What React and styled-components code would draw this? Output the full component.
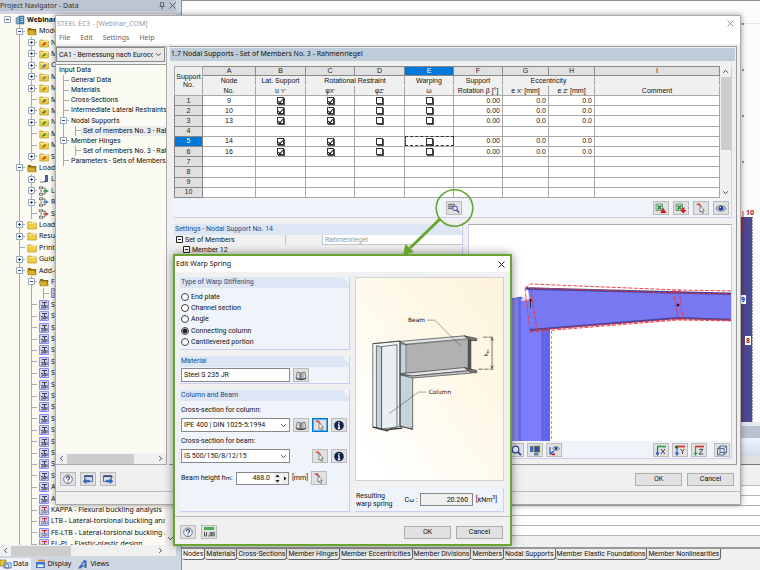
import { Fragment } from "react";
import styled, { createGlobalStyle, css } from "styled-components";

const MODULES = [
  "STEEL", "STEEL EC3", "STEEL AISC", "STEEL SIA", "STEEL IS", "STEEL BS",
  "STEEL GB", "STEEL CSA", "STEEL AS", "STEEL NTC-DF", "STEEL SP",
  "STEEL Plastic", "STEEL SANS", "STEEL Fatigue Members", "STEEL NBR",
  "STEEL HK", "ALUMINUM", "ALUMINUM ADM",
];

const NAV_ROWS = [
  { depth: 0, icon: "project", label: "Webinar", box: "-", bold: true },
  { depth: 1, icon: "open", label: "Model Data", box: "-" },
  { depth: 2, icon: "folder", label: "Nodes", box: "+", mark: "#c22" },
  { depth: 2, icon: "folder", label: "Materials", box: "+", mark: "#2a8a3a" },
  { depth: 2, icon: "folder", label: "Cross-Sections", box: "+", mark: "#2a5fd0" },
  { depth: 2, icon: "folder", label: "Member Hinges", box: "+", mark: "#777" },
  { depth: 2, icon: "folder", label: "Member Eccentricities", box: "+", mark: "#b06a20" },
  { depth: 2, icon: "folder", label: "Member Divisions", mark: "#555" },
  { depth: 2, icon: "folder", label: "Members", box: "+", mark: "#555" },
  { depth: 2, icon: "folder", label: "Nodal Supports", box: "+", mark: "#1a8a2a" },
  { depth: 2, icon: "folder", label: "Member Elastic Foundations", mark: "#1a8a2a" },
  { depth: 2, icon: "folder", label: "Member Nonlinearities", mark: "#a8501a" },
  { depth: 2, icon: "folder", label: "Sets of Members", box: "+", mark: "#c22" },
  { depth: 1, icon: "open", label: "Load Cases and Combinations", box: "-" },
  { depth: 2, icon: "load", label: "Load Cases", box: "+" },
  { depth: 2, icon: "combo", label: "Load Combinations", box: "+", mark: "#1a9a3a" },
  { depth: 2, icon: "combo", label: "Result Combinations", box: "+", mark: "#3a7ad8" },
  { depth: 2, icon: "combo", label: "Super Combinations", mark: "#d02020" },
  { depth: 1, icon: "folder", label: "Loads", box: "+" },
  { depth: 1, icon: "folder", label: "Results", box: "+" },
  { depth: 1, icon: "folder", label: "Printout Reports" },
  { depth: 1, icon: "folder", label: "Guide Objects", box: "+" },
  { depth: 1, icon: "open", label: "Add-on Modules", box: "-" },
  { depth: 2, icon: "open", label: "Favorites", box: "-" },
  { depth: 3, icon: "module", label: "STEEL EC3", mark: "#c22" },
  ...MODULES.map((label) => ({ depth: 2, icon: "module", label })),
  { depth: 2, icon: "module", label: "KAPPA - Flexural buckling analysis", mark: "#c22" },
  { depth: 2, icon: "module", label: "LTB - Lateral-torsional buckling analysis", mark: "#c22" },
  { depth: 2, icon: "module", label: "FE-LTB - Lateral-torsional buckling analysis", mark: "#c22" },
  { depth: 2, icon: "module", label: "EL-PL - Elastic-plastic design", mark: "#c22" },
];

const INPUT_ROWS = [
  { depth: 0, label: "Input Data" },
  { depth: 1, label: "General Data" },
  { depth: 1, label: "Materials" },
  { depth: 1, label: "Cross-Sections" },
  { depth: 1, label: "Intermediate Lateral Restraints" },
  { depth: 1, label: "Nodal Supports", box: "-" },
  { depth: 2, label: "Set of members No. 3 - Rahmenriegel", selected: true },
  { depth: 1, label: "Member Hinges", box: "-" },
  { depth: 2, label: "Set of members No. 3 - Rahmenriegel" },
  { depth: 1, label: "Parameters - Sets of Members" },
];

const SUPPORTS = { 1: "9", 2: "10", 3: "13", 5: "14", 6: "16" };

const DATA_TABS = [
  "Nodes", "Materials", "Cross-Sections", "Member Hinges",
  "Member Eccentricities", "Member Divisions", "Members", "Nodal Supports",
  "Member Elastic Foundations", "Member Nonlinearities",
];

const STIFFENING = [
  "End plate", "Channel section", "Angle", "Connecting column",
  "Cantilevered portion",
];

/* ---------- icons ---------- */

function Chevron({ dir = "down" }) {
  const turn = { down: 0, left: 90, up: 180, right: 270 }[dir];
  return (
    <svg width="7" height="7" viewBox="0 0 7 7" aria-hidden="true">
      <path d="M1.2 2.3 3.5 4.6 5.8 2.3" fill="none" stroke="#444" strokeWidth="1" transform={`rotate(${turn} 3.5 3.5)`} />
    </svg>
  );
}

function CloseIcon({ color = "#555" }) {
  return (
    <svg width="7" height="7" viewBox="0 0 7 7" aria-hidden="true">
      <path d="M.5.5 6.5 6.5M6.5.5.5 6.5" stroke={color} strokeWidth=".9" />
    </svg>
  );
}

function ExpandIcon({ plus, dark }) {
  return (
    <svg width="7" height="7" viewBox="0 0 7 7" aria-hidden="true">
      <path d="M.5.5h6v6h-6z" fill="#fff" stroke={dark ? "#222" : "#9aa6ba"} />
      <path d={plus ? "M2 3.500h3M3.500 2v3" : "M2 3.500h3"} stroke={dark ? "#222" : "#3a4a78"} />
    </svg>
  );
}

function NavIcon({ type, mark }) {
  return (
    <svg width="10" height="10" viewBox="0 0 10 10" aria-hidden="true">
      {type === "project" && (
        <>
          <path d="M1 3 5 1v8H1z" fill="#7fa8c8" stroke="#49708f" strokeWidth=".5" />
          <path d="M4.5 1H9v8H4.5z" fill="#4f86b4" stroke="#335f86" strokeWidth=".5" />
          <path d="M5.500 2.500h2.600M5.500 4.500h2.600M5.500 6.500h2.600" stroke="#dbe9f4" strokeWidth=".7" />
        </>
      )}
      {type === "open" && (
        <>
          <path d="M.8 2h3l1 1h4.400v6H.8z" fill="#8a6d10" />
          <path d="M0 4.200h7.500L9.200 9H1.500z" fill="#d3b02a" stroke="#8d7214" strokeWidth=".4" />
        </>
      )}
      {type === "folder" && (
        <>
          <path d="M.8 2h3l1 1h4.600v6H.8z" fill="#f0cf45" stroke="#a98c1c" strokeWidth=".6" />
          <path d="M1.200 3.500h8" stroke="#fff0a0" strokeWidth=".7" />
          {mark && <path d="M3.500 7.500 6.500 4.500M5 6h1.500" stroke={mark} strokeWidth="1.300" />}
        </>
      )}
      {type === "load" && (
        <>
          <path d="M1 8h6" stroke="#777" />
          <path d="M6 1h3v7H5l1-2z" fill="#4a5f92" />
        </>
      )}
      {type === "combo" && (
        <>
          <path d="M.5.8h3v2h-3zM.5 7.200h3v2h-3z" fill="#fff" stroke="#333" strokeWidth=".7" />
          <path d="M4 2h2v6H4M2 4v2M4 5h2" fill="none" stroke="#333" strokeWidth=".7" />
          <path d="M6.500 3 9.800 5 6.500 7z" fill={mark} />
        </>
      )}
      {type === "module" && (
        <>
          <path d="M.5.5h9v9h-9z" fill="#d2d2ee" stroke="#8c8cf4" />
          <path d="M3 2.500h5M5.500 2.500v3" stroke={mark || "#3f4358"} fill="none" />
          <path d="M2 5.500h2v2.500M2 8h2M5 5.500h1.500V8H5zM8 5v3" stroke={mark ? "#7a7e92" : "#3f4358"} strokeWidth=".9" fill="none" />
        </>
      )}
    </svg>
  );
}

function Glyph({ name }) {
  return (
    <svg width="12" height="11" viewBox="0 0 12 11" aria-hidden="true">
      {name === "help" && (
        <>
          <circle cx="6" cy="5.300" r="4.300" fill="#f4f6fa" stroke="#667" strokeWidth=".9" />
          <path d="M4.400 4.200c0-2.200 3.400-2 3.200 0C7.500 5.200 6 5.200 6 6.500M6 7.400v1" stroke="#2c3f80" strokeWidth="1.100" fill="none" />
        </>
      )}
      {(name === "prev" || name === "next") && (
        <>
          <path d={name === "prev" ? "M2.500 1.500h8v6h-8z" : "M1.500 1.500h8v6h-8z"} fill="#dce6f2" stroke="#37507c" strokeWidth=".8" />
          <path d="M2 2.500h8.500" stroke="#37507c" strokeWidth="1.300" />
          <path d={name === "prev" ? "M.5 7.200 4.500 3.800v2h4v2.800h-4v2z" : "M11.500 7.200 7.500 3.800v2h-4v2.800h4v2z"} fill="#2c66b8" stroke="#fff" strokeWidth=".3" />
        </>
      )}
      {name === "details" && (
        <>
          <path d="M0 1.500h7M0 3.500h7M0 5.500h5" stroke="#7a7f86" strokeWidth="1.300" />
          <circle cx="7" cy="5.300" r="2.300" fill="#dfe9fb" stroke="#3a4ea4" />
          <path d="m8.700 7 2.500 2.700" stroke="#3a4ea4" strokeWidth="1.500" />
        </>
      )}
      {(name === "excelUp" || name === "excelDown") && (
        <>
          <path d="M1 1h6.500v6.500H1z" fill="#cfe6d4" stroke="#6f9a7a" />
          <path d="m2.500 2.500 4 4M6.500 2.500l-4 4" stroke="#1e7a3c" strokeWidth="1.300" />
          <path d={name === "excelUp" ? "M8.300 5 11.500 10H5.200z" : "M8.300 10.500 5.200 7.200 7.200 7V4.500h2.200V7l2 .2z"} fill="#d51d1d" />
        </>
      )}
      {name === "pick" && (
        <>
          <path d="m1.500 1 4.500 1.500M3.500 0l3 4" stroke="#d44" strokeWidth="1.200" />
          <path d="m5 2.500 4.300 5-1.700.1 1 2.200-1.200.5-1-2.200L5 9z" fill="#fff" stroke="#555" strokeWidth=".7" />
        </>
      )}
      {name === "eye" && (
        <>
          <path d="M.8 5.500C3 1.600 9 1.600 11.200 5.500 9 9.200 3 9.200.8 5.500z" fill="#b7c0d2" stroke="#5d6880" strokeWidth=".7" />
          <circle cx="6" cy="5.200" r="2.300" fill="#1e3d94" />
          <circle cx="5.400" cy="4.600" r=".7" fill="#fff" />
        </>
      )}
      {name === "library" && (
        <>
          <path d="M1 8 2.300 2l3.400 1v6zM6.300 9V3L9.700 2 11 8z" fill="#dedede" stroke="#666" strokeWidth=".8" />
          <path d="M1 8.700 6 9.700l5-1" stroke="#333" fill="none" />
          <path d="M4.500 3v5M8 3v5" stroke="#888" strokeWidth=".8" />
        </>
      )}
      {name === "info" && (
        <>
          <circle cx="6" cy="5.500" r="4.800" fill="#14234c" />
          <path d="M6 2v1.500M6 4.700v3.800M4.800 8.500h2.400M5 4.700h1" stroke="#fff" strokeWidth="1.300" />
        </>
      )}
      {name === "units" && (
        <>
          <path d="M1 0h10v3H1z" fill="#4cab54" />
          <path d="M1.500 5v4h2V5M5 9h1M7 5.500h1.500V9H7zM9.800 5.500h1.500V9H9.800z" fill="none" stroke="#333" strokeWidth=".8" />
        </>
      )}
      {name === "zoom" && (
        <>
          <circle cx="5.500" cy="4.500" r="3.300" fill="#eef3ff" stroke="#2a4390" strokeWidth="1.200" />
          <path d="m8 7 3 3.200" stroke="#2a4390" strokeWidth="1.700" />
        </>
      )}
      {name === "views" && (
        <>
          <path d="M1 1h3.500v6H1z" fill="#4a68ac" />
          <path d="M5 .8h6v6.700H5z" fill="#32529c" stroke="#d6c03a" strokeWidth=".7" />
          <path d="M5 8h4.500v2.500H5z" fill="#6a84bb" />
        </>
      )}
      {name === "axes" && (
        <>
          <path d="M2 2v7h5M2 9l4-3" stroke="#2255c4" strokeWidth="1.100" fill="none" />
          <path d="M4 9.500h3" stroke="#d22" strokeWidth="1.500" />
          <path d="M4.500 3.500C6 1 10 1 11.500 3.500 10 6 6 6 4.500 3.500z" fill="#cfd8ea" stroke="#345" strokeWidth=".6" />
          <circle cx="8" cy="3.400" r="1.400" fill="#1e3d94" />
        </>
      )}
      {name === "axisX" && (
        <>
          <path d="M2 1.500h9" stroke="#27a54a" strokeWidth="1.700" />
          <path d="M2.500 2v8M1 7.500 2.500 10 4 7.500" stroke="#2c50c8" strokeWidth="1.100" fill="none" />
          <path d="m6 4 4 5M10 4 6 9" stroke="#333" strokeWidth=".9" />
        </>
      )}
      {name === "axisY" && (
        <>
          <path d="M3 1.500h8" stroke="#d33" strokeWidth="1.700" />
          <path d="M3 2v8M1.500 7.500 3 10l1.500-2.500" stroke="#2c50c8" strokeWidth="1.100" fill="none" />
          <circle cx="2.500" cy="2" r="1.600" fill="#1c7030" />
          <path d="m6.500 4 2 2.500L10.500 4M8.500 6.500V9" stroke="#333" strokeWidth=".9" fill="none" />
        </>
      )}
      {name === "axisZ" && (
        <>
          <path d="M2 1.500h9" stroke="#d33" strokeWidth="1.700" />
          <path d="M2.500 2v8M1 7.500 2.500 10 4 7.500" stroke="#27a54a" strokeWidth="1.100" fill="none" />
          <path d="M6 4.300h4L6 9h4.300" stroke="#333" strokeWidth=".9" fill="none" />
        </>
      )}
      {name === "iso" && (
        <path d="M1.500 3.500h6.500V10H1.500zM4 1h6.500v6.500H4zM1.500 3.500 4 1M8 3.500 10.500 1M8 10l2.500-2.500M1.500 10 4 7.500" fill="none" stroke="#4b6492" strokeWidth=".9" />
      )}
      {name === "tabData" && (
        <>
          <path d="M0 1h6v6H0z" fill="#e9c736" stroke="#7a6a20" strokeWidth=".6" />
          <path d="M4 4h7v5H4z" fill="#fff" stroke="#3a6aa8" strokeWidth=".9" />
          <circle cx="7" cy="7" r="2" fill="#e8f0ff" stroke="#27508e" strokeWidth=".8" />
        </>
      )}
      {name === "tabDisplay" && (
        <>
          <path d="M1 3h9v6H1z" fill="#3f77bd" />
          <path d="M2.500 5.500h6v2.500h-6z" fill="#e7eef8" />
          <path d="M3 1.500h7" stroke="#c98a2a" strokeWidth="1.600" />
        </>
      )}
      {name === "tabViews" && (
        <>
          <path d="M1 9.500 7 1l2.500.5V9H7.500V6.500L3.500 9.500z" fill="#3a68b8" />
          <path d="M4.500 6.500 7.500 3v2.500z" fill="#dfe8f6" />
        </>
      )}
    </svg>
  );
}

/* ---------- small parts ---------- */

function Tree({ rows, className }) {
  return (
    <TreeList className={className}>
      {rows.map((row, i) => {
        const cells = row.icon ? row.depth + 1 : row.depth;
        return (
          <TreeRow key={i} $bold={row.bold}>
            {Array.from({ length: cells }, (_, d) => (
              <Branch key={d} $own={d === cells - 1} $line={d > 0 || !row.icon}>
                {d === cells - 1 && row.box && <ExpandIcon plus={row.box === "+"} />}
              </Branch>
            ))}
            {row.icon && <IconSlot><NavIcon type={row.icon} mark={row.mark} /></IconSlot>}
            <TreeLabel $selected={row.selected}>{row.label}</TreeLabel>
          </TreeRow>
        );
      })}
    </TreeList>
  );
}

function HScroll() {
  return (
    <ScrollRow>
      <Chevron dir="left" />
      <ScrollTrack>
        <ScrollThumb />
      </ScrollTrack>
      <Chevron dir="right" />
    </ScrollRow>
  );
}

function Tool({ icon, label, focused }) {
  return (
    <IconButton type="button" aria-label={label} $focused={focused}>
      <Glyph name={icon} />
    </IconButton>
  );
}

function Picker({ id, value, label }) {
  return (
    <SelectWrap>
      <Select id={id} aria-label={label} defaultValue={value}>
        <option>{value}</option>
      </Select>
      <Chevron />
    </SelectWrap>
  );
}

/* ---------- drawings ---------- */

function FrameDrawing() {
  return (
    <Scene aria-label="Frame model">
      <g transform="translate(-469 -224)">
        <path d="M505 298 521 296l28 3v143h-44z" fill="#7d7dfa" />
        <path d="M505 299 518 297v145h-13z" fill="#8787e6" />
        <path d="M518 296h3v146h-3zM541 300h4v142h-4z" fill="#6969ec" />
        <path d="M545 300h5v142h-5z" fill="#6262f2" />
        <path d="m512 298 8-2 24 5 6-2M543 301v141" fill="none" stroke="#4f4fb0" strokeWidth=".6" strokeDasharray="3 1" />
        <path d="M551.500 330v112" stroke="#888" strokeDasharray="3 2" strokeWidth=".8" />
        <path d="M528 287 678 291l60 2v26l-60-2-147 12z" fill="#7878f3" />
        <path d="M526 287.500 678 291.500l60 1.500" stroke="#45459c" strokeWidth="2.500" fill="none" />
        <path d="m530 329 148-12 60 2" stroke="#45459c" strokeWidth="2" fill="none" />
        <path d="M522 297 528 290l2 9-9 1z" fill="#fff" opacity=".7" />
        <g fill="none" stroke="#ec3038" strokeWidth=".9" strokeDasharray="4 1.500">
          <path d="m525 287 6-4 147 6 60 1M525 287l5 44 148-12 60 1M531 288l6 41M531 287l147 5 60 1M535 329l143-11 60 1" />
          <path d="m673 290 5 27M679 289l4 28M672 290h9M675 318h8" />
        </g>
        <path d="M530.500 299v8" stroke="#333" />
        <circle cx="530.500" cy="299" r="1.300" fill="#800" />
        <circle cx="678" cy="304" r="1.500" fill="#600" />
      </g>
    </Scene>
  );
}

function JointDrawing() {
  return (
    <JointSvg viewBox="0 0 149 206" aria-label="Connecting column">
      <g transform="scale(.3333) translate(-15 -52)" stroke="#333" strokeWidth="2" strokeLinejoin="round">
        <path d="M148 250 187 262V515L148 505z" fill="#c6d3da" />
        <path d="M65 253 148 245 148 505 110 516 65 508z" fill="#f3f6f8" />
        <path d="M76 259 92 263V514L76 509z" fill="#c3d1d8" />
        <path d="M92 262 139 256V508L92 514z" fill="#e9f0f4" />
        <path d="M65 508 110 520 113 516 155 511" fill="none" strokeWidth="4" />
        <path d="M148 505 187 515 180 508" fill="none" />
        <path d="M166 256 362 240V328L166 344z" fill="#b1b1b1" strokeWidth="1" />
        <path d="M150 256 166 256V340L150 346z" fill="#c6d3da" strokeWidth="1" />
        <path d="M148 246 345 229 364 237 166 255z" fill="#dde2e4" />
        <path d="M345 229 383 237V244L364 243z" fill="#777" />
        <path d="M357 242h8v92l-8-6z" fill="#555" />
        <path d="M150 345 345 326 366 335 186 352z" fill="#e2e5e6" />
        <path d="M150 348 186 358 366 343V335L186 352z" fill="#c5c8ca" />
        <path d="M345 326 383 335V342L366 342z" fill="#777" />
        <path d="M65 253 148 245V505" fill="none" />
        <path d="M230 181H255L335 261M228 401H205L115 467" fill="none" stroke="#444" strokeWidth="1.500" />
        <path d="M402 233H434M388 331H434" strokeWidth="2" strokeDasharray="14 3" />
        <path d="M430 236V328M426 244 430 235 434 244M426 320 430 329 434 320" fill="none" strokeWidth="2" />
        <g stroke="none" fill="#111" fontSize="18">
          <text x="173" y="187" fontFamily="DejaVu Sans">Beam</text>
          <text x="236" y="407" fontFamily="DejaVu Sans">Column</text>
          <text transform="translate(416 292) rotate(-90)">h<tspan fontSize="13" dy="4">m</tspan></text>
        </g>
      </g>
    </JointSvg>
  );
}

/* ---------- page sections ---------- */

function Navigator() {
  return (
    <NavPane>
      <NavTitle>
        <span>Project Navigator - Data</span>
        <NavTitleTools>
          <svg width="6" height="8" viewBox="0 0 6 8" aria-hidden="true">
            <path d="M1.500.5h3v4h-3zM.3 4.500h5.400M3 4.500v3" fill="none" stroke="#555" strokeWidth=".8" />
          </svg>
          <CloseIcon />
        </NavTitleTools>
      </NavTitle>
      <NavBody>
        <NavTree rows={NAV_ROWS} />
        <NavVScroll>
          <Chevron />
        </NavVScroll>
      </NavBody>
      <HScroll />
      <NavTabs>
        <NavTab type="button" $active><Glyph name="tabData" />Data</NavTab>
        <NavTab type="button"><Glyph name="tabDisplay" />Display</NavTab>
        <NavTab type="button"><Glyph name="tabViews" />Views</NavTab>
      </NavTabs>
    </NavPane>
  );
}

function Workspace() {
  return (
    <WorkPane>
      <ModelView>
        <svg width="60" height="424" aria-label="Model">
          <path d="M0 22.500h60" stroke="#e8e8e8" />
          <path d="M42 23h2M42 69h2M42 115h2M42 161h2" stroke="#333" />
          <path d="M41 216h11v205H41z" fill="#4a4a92" />
          <path d="M52.500 216v205" stroke="#999" strokeDasharray="2 1" />
          <path d="m42 232 1-22v214" stroke="#c22" strokeWidth=".8" fill="none" opacity=".6" />
          <path d="M41 294h5v9h-5zM45 335h6v9h-6z" fill="#fff" />
          <g fontSize="7" fontWeight="bold">
            <text x="46" y="214" fill="#8c1010">10</text>
            <text x="41" y="301" fill="#1a1ac0">9</text>
            <text x="46" y="342" fill="#8c1010">8</text>
          </g>
        </svg>
      </ModelView>
      <PanelTitle />
      <PanelTools />
      <PanelLetters />
      <PanelHead />
      {[1, 2, 3, 4, 5].map((n) => <PanelLine key={n} />)}
      <DataTabs>
        {DATA_TABS.map((tab, i) => (
          <DataTab type="button" key={tab} $active={i === 0}>{tab}</DataTab>
        ))}
      </DataTabs>
    </WorkPane>
  );
}

function SupportTable() {
  return (
    <TableFrame>
      <Grid>
        <colgroup>
          {[28, 53, 50, 49, 50, 49, 49, 46, 46].map((w, i) => <col key={i} width={w} />)}
          <col />
        </colgroup>
        <thead>
          <tr>
            <HeadCell rowSpan="3">Support<br />No.</HeadCell>
            {[..."ABCDEFGHI"].map((l) => <LetterCell key={l} $on={l === "E"}>{l}</LetterCell>)}
          </tr>
          <tr>
            <HeadCell $top>Node</HeadCell>
            <HeadCell $top>Lat. Support</HeadCell>
            <HeadCell $top colSpan="2">Rotational Restraint</HeadCell>
            <HeadCell $top>Warping</HeadCell>
            <HeadCell $top>Support</HeadCell>
            <HeadCell $top colSpan="2">Eccentricity</HeadCell>
            <HeadCell $top />
          </tr>
          <tr>
            <HeadCell $low>No.</HeadCell>
            <HeadCell $low>u <Small>Y'</Small></HeadCell>
            <HeadCell $low>φ<Small>X'</Small></HeadCell>
            <HeadCell $low>φ<Small>Z'</Small></HeadCell>
            <HeadCell $low>ω</HeadCell>
            <HeadCell $low>Rotation β [°]</HeadCell>
            <HeadCell $low>e <Small>X'</Small> [mm]</HeadCell>
            <HeadCell $low>e <Small>Z'</Small> [mm]</HeadCell>
            <HeadCell $low>Comment</HeadCell>
          </tr>
        </thead>
        <tbody>
          {Array.from({ length: 10 }, (_, i) => i + 1).map((n) => {
            const node = SUPPORTS[n];
            return (
              <tr key={n}>
                <RowHead $on={n === 5}>{n}</RowHead>
                <Cell>{node}</Cell>
                {["Lateral", "Rotation X", "Rotation Z", "Warping"].map((name, c) => (
                  <Cell key={name} $cursor={n === 5 && c === 3}>
                    {node && <Check type="checkbox" aria-label={`${name} ${node}`} defaultChecked={c < 2} />}
                  </Cell>
                ))}
                <Cell $num>{node && "0.00"}</Cell>
                <Cell $num>{node && "0.0"}</Cell>
                <Cell $num>{node && "0.0"}</Cell>
                <Cell />
              </tr>
            );
          })}
        </tbody>
      </Grid>
      <VScroll>
        <Chevron dir="up" />
        <VThumb />
        <Chevron />
      </VScroll>
    </TableFrame>
  );
}

function DesignWindow() {
  return (
    <MainWindow>
      <TitleBar>
        <span>STEEL EC3 - [Webinar_COM]</span>
        <PlainButton type="button" aria-label="Close"><CloseIcon color="#888" /></PlainButton>
      </TitleBar>
      <MenuBar>
        {["File", "Edit", "Settings", "Help"].map((m) => <PlainButton type="button" key={m}>{m}</PlainButton>)}
      </MenuBar>
      <WindowBody>
        <Sidebar>
          <CasePicker>
            <Picker label="Design case" value="CA1 - Bemessung nach Eurocode 3" />
          </CasePicker>
          <SideTree>
            <InputTree rows={INPUT_ROWS} />
            <HScroll />
          </SideTree>
        </Sidebar>
        <Content>
          <Heading>1.7 Nodal Supports - Set of Members No. 3 - Rahmenriegel</Heading>
          <TablePanel>
            <SupportTable />
            <TableTools>
              <ToolGroup $start={272}><Tool icon="details" label="Edit warp spring" /></ToolGroup>
              <ToolGroup $gap={4}>
                <Tool icon="excelUp" label="Export" />
                <Tool icon="excelDown" label="Import" />
                <Tool icon="pick" label="Pick" />
                <Tool icon="eye" label="View" />
              </ToolGroup>
            </TableTools>
          </TablePanel>
          <LowerArea>
            <SettingsPanel>
              <GroupTitle>Settings - Nodal Support No. 14</GroupTitle>
              <SettingRow>
                <SettingName><ExpandIcon dark />Set of Members</SettingName>
                <SettingSymbol />
                <SettingValue>Rahmenriegel</SettingValue>
              </SettingRow>
              <SettingRow $sub><ExpandIcon dark />Member 12</SettingRow>
            </SettingsPanel>
            <ViewPanel>
              <FrameDrawing />
              <ViewTools>
                <ToolGroup $start={38} $gap={3}>
                  <Tool icon="zoom" label="Zoom" />
                  <Tool icon="views" label="Views" />
                  <Tool icon="axes" label="Show axes" />
                </ToolGroup>
                <ToolGroup $gap={3}>
                  <Tool icon="axisX" label="View in X" />
                  <Tool icon="axisY" label="View in Y" />
                  <Tool icon="axisZ" label="View in Z" />
                  <LastTool><Tool icon="iso" label="Isometric view" /></LastTool>
                </ToolGroup>
              </ViewTools>
            </ViewPanel>
          </LowerArea>
        </Content>
      </WindowBody>
      <WindowFooter>
        <ToolGroup $gap={4}>
          <Tool icon="help" label="Help" />
          <Tool icon="prev" label="Previous" />
          <Tool icon="next" label="Next" />
        </ToolGroup>
        <ButtonPair>
          <PushButton type="button">OK</PushButton>
          <PushButton type="button">Cancel</PushButton>
        </ButtonPair>
      </WindowFooter>
      <StatusBar />
    </MainWindow>
  );
}

function WarpDialog() {
  return (
    <Dialog role="dialog" aria-label="Edit Warp Spring">
      <DialogTitle>
        <span>Edit Warp Spring</span>
        <PlainButton type="button" aria-label="Close"><CloseIcon color="#111" /></PlainButton>
      </DialogTitle>
      <DialogBody>
        <FormColumn>
          <Group>
            <GroupTitle>Type of Warp Stiffening</GroupTitle>
            <RadioList>
              {STIFFENING.map((name) => (
                <RadioLabel key={name}>
                  <Radio type="radio" name="stiffening" defaultChecked={name === "Connecting column"} />
                  {name}
                </RadioLabel>
              ))}
            </RadioList>
          </Group>
          <Group>
            <GroupTitle>Material</GroupTitle>
            <FieldRow>
              <TextField aria-label="Material" defaultValue="Steel S 235 JR" />
              <Tool icon="library" label="Material library" />
            </FieldRow>
          </Group>
          <Group $grow>
            <GroupTitle>Column and Beam</GroupTitle>
            <SectionFields>
              <label htmlFor="column">Cross-section for column:</label>
              <FieldRow>
                <Picker id="column" value="IPE 400 | DIN 1025-5:1994" />
                <Tool icon="library" label="Section library" />
                <Tool icon="pick" label="Pick column" focused />
                <Tool icon="info" label="Column info" />
              </FieldRow>
              <label htmlFor="beam">Cross-section for beam:</label>
              <FieldRow>
                <Picker id="beam" value="IS 500/150/8/12/15" />
                <ToolSpace />
                <Tool icon="pick" label="Pick beam" />
                <Tool icon="info" label="Beam info" />
              </FieldRow>
              <HeightRow>
                <label htmlFor="height">Beam height h<Small>m</Small>:</label>
                <Spin>
                  <SpinInput id="height" defaultValue="488.0" />
                  <svg width="14" height="11" viewBox="0 0 14 11" aria-hidden="true">
                    <path d="M0 0h7v11H0zM8 0h6v11H8z" fill="#eee" />
                    <path d="M1.500 4 3.500 1.500 5.500 4zM1.500 7 3.500 9.500 5.500 7zM10 3.500v4l2.500-2z" fill="#111" />
                  </svg>
                </Spin>
                <Unit>[mm]</Unit>
                <Tool icon="pick" label="Pick height" />
              </HeightRow>
            </SectionFields>
          </Group>
        </FormColumn>
        <PreviewColumn>
          <Preview><JointDrawing /></Preview>
          <Result>
            <ResultName htmlFor="result">Resulting warp spring</ResultName>
            <span>C<Small>ω</Small> :</span>
            <ResultField id="result" readOnly value="20.260" />
            <span>[kNm<Super>3</Super>]</span>
          </Result>
        </PreviewColumn>
      </DialogBody>
      <DialogFooter>
        <ToolGroup $gap={5}>
          <Tool icon="help" label="Help" />
          <Tool icon="units" label="Units and decimal places" />
        </ToolGroup>
        <ButtonPair>
          <PushButton type="button">OK</PushButton>
          <PushButton type="button">Cancel</PushButton>
        </ButtonPair>
      </DialogFooter>
    </Dialog>
  );
}

function App() {
  return (
    <Fragment>
      <GlobalStyle />
      <Desktop>
        <Navigator />
        <Workspace />
        <DesignWindow />
        <WarpDialog />
        <Callout width="90" height="72" viewBox="395 186 90 72" aria-hidden="true">
          <circle cx="454.500" cy="208" r="18.300" fill="none" stroke="#66a52e" strokeWidth="1.600" />
          <path d="M440 219 410 248" stroke="#66a52e" strokeWidth="3" />
          <path d="M403 255 405.500 244 414 252z" fill="#66a52e" />
        </Callout>
      </Desktop>
    </Fragment>
  );
}

const GlobalStyle = createGlobalStyle`
  * {
    box-sizing: border-box;
  }
  body {
    margin: 0;
    overflow: hidden;
    font: 7px/10px Roboto, "Liberation Sans", Arial, sans-serif;
    color: #111;
  }
  button, input, select {
    font: inherit;
    color: inherit;
  }
  svg {
    flex: none;
    display: block;
  }
`;

const Desktop = styled.div`
  position: relative;
  display: grid;
  grid-template-columns: 181px 1fr;
  grid-template-rows: minmax(0, 1fr);
  height: 100vh;
  background-color: #c5ccd8;
`;

/* navigator */

const NavPane = styled.aside`
  display: flex;
  flex-direction: column;
  min-height: 0;
  background-color: #d0d7e3;
  font-family: "Noto Sans", sans-serif;
`;

const NavTitle = styled.div`
  display: flex;
  justify-content: space-between;
  align-items: center;
  height: 11px;
  margin: 0 5px 3px 0;
  background-color: #bdc5d2;
  color: #333;
`;

const NavTitleTools = styled.span`
  display: flex;
  gap: 4px;
`;

const NavBody = styled.div`
  flex: 1;
  min-height: 0;
  display: flex;
  overflow: hidden;
  margin-right: 5px;
  background-color: #fbfbf3;
`;

const NavVScroll = styled.div`
  display: flex;
  flex: none;
  align-items: flex-end;
  width: 11px;
  padding: 0 2px 3px;
  background-color: #f0f0f0;
`;

const TreeList = styled.ul`
  display: grid;
  grid-auto-rows: minmax(0, 1fr);
  margin: 0;
  padding: 0 0 0 1px;
  list-style: none;
`;

const NavTree = styled(Tree)`
  flex: 1;
  min-width: 0;
  height: calc(100% + 5px);
`;

const InputTree = styled(Tree)`
  height: 101px;
  margin-bottom: auto;
`;

const TreeRow = styled.li`
  display: flex;
  align-items: center;
  min-height: 0;
  overflow: hidden;
  white-space: nowrap;
  font-weight: ${(p) => (p.$bold ? "bold" : "normal")};
`;

const Branch = styled.span`
  align-self: stretch;
  flex: none;
  display: grid;
  place-items: center;
  width: 12px;
  ${(p) =>
    p.$line &&
    css`
      background: linear-gradient(#aaa, #aaa) 6px 0 / 1px 100% no-repeat;
    `}
  ${(p) =>
    p.$line &&
    p.$own &&
    css`
      background:
        linear-gradient(#aaa, #aaa) 6px 0 / 1px 100% no-repeat,
        linear-gradient(#aaa, #aaa) 6px 50% / 6px 1px no-repeat;
    `}
`;

const IconSlot = styled.span`
  flex: none;
  padding-left: 2px;
`;

const TreeLabel = styled.span`
  padding-left: 2px;
  background-color: ${(p) => (p.$selected ? "#ececec" : "transparent")};
`;

const ScrollRow = styled.div`
  display: flex;
  flex: none;
  align-items: center;
  gap: 2px;
  height: 11px;
  padding: 0 2px;
  background-color: #f0f0f0;
  ${NavPane} & {
    margin-right: 5px;
    padding-right: 12px;
  }
`;

const ScrollTrack = styled.div`
  flex: 1;
`;

const ScrollThumb = styled.div`
  width: 60px;
  height: 10px;
  background-color: #cdcdcd;
`;

const NavTabs = styled.div`
  display: flex;
  flex: none;
  gap: 4px;
  height: 14px;
  padding-top: 2px;
`;

const NavTab = styled.button`
  display: flex;
  align-items: center;
  gap: 1px;
  padding: 0 2px 0 0;
  border: 0;
  background-color: ${(p) => (p.$active ? "#eef1f6" : "transparent")};
`;

/* workspace behind the windows */

const WorkPane = styled.main`
  display: flex;
  flex-direction: column;
  min-width: 0;
  border-top: 1px solid #8e8e8e;
  border-left: 1px solid #8e8e8e;
  background-color: #f0f0f0;
`;

const ModelView = styled.div`
  flex: 1;
  min-height: 0;
  overflow: hidden;
  display: flex;
  justify-content: flex-end;
  background-color: #fcfcfc;
`;

const PanelTitle = styled.div`
  height: 16px;
  border-top: 4px solid #e6e8ec;
  background-color: #b9c2ce;
`;

const PanelTools = styled.div`
  height: 18px;
  background: linear-gradient(#eef3fb, #d3dceb);
`;

const PanelLetters = styled.div`
  height: 9px;
  border-bottom: 1px solid #777;
  background-color: #e0e0e0;
`;

const PanelHead = styled.div`
  height: 21px;
  border-bottom: 1px solid #bbb;
`;

const PanelLine = styled.div`
  height: 10px;
  border-bottom: 1px solid #b5b5b5;
  background-color: #fff;
`;

const DataTabs = styled.div`
  display: flex;
  height: 23px;
  margin-top: 11px;
  border-top: 2px solid #999;
`;

const DataTab = styled.button`
  height: 11px;
  padding: 0 1px;
  border: 1px solid #666;
  border-width: 0 1px 1px 0;
  border-radius: 0 0 3px 3px;
  background-color: ${(p) => (p.$active ? "#fff" : "#ececec")};
  line-height: 10px;
  white-space: nowrap;
`;

/* shared controls */

const PlainButton = styled.button`
  padding: 0;
  border: 0;
  background: none;
`;

const IconButton = styled.button`
  display: grid;
  place-items: center;
  flex: none;
  width: 16px;
  height: 14px;
  padding: 0;
  border: 1px solid #bbb;
  background-color: #e1e1e1;
  ${(p) =>
    p.$focused &&
    css`
      border-color: #0078d7;
      box-shadow: inset 0 0 0 1px #5aa9e6;
    `}
`;

const PushButton = styled.button`
  width: 47px;
  height: 13px;
  padding: 0;
  border: 1px solid #adadad;
  background-color: #e1e1e1;
`;

const ButtonPair = styled.div`
  display: flex;
  gap: 5px;
`;

const ToolGroup = styled.div`
  display: flex;
  gap: ${(p) => p.$gap || 0}px;
  margin-left: ${(p) => p.$start || 0}px;
`;

const LastTool = styled.span`
  margin-left: 4px;
`;

const ToolSpace = styled.span`
  width: 16px;
`;

const SelectWrap = styled.span`
  display: flex;
  align-items: center;
  width: 109px;
  height: 14px;
  padding-right: 2px;
  border: 1px solid #888;
  background-color: #fff;
`;

const Select = styled.select`
  appearance: none;
  flex: 1;
  min-width: 0;
  padding: 0 2px;
  border: 0;
  background: none;
`;

const Small = styled.span`
  font-size: 6px;
`;

const Super = styled.span`
  font-size: 5px;
  vertical-align: super;
  line-height: 1px;
`;

/* STEEL EC3 window */

const MainWindow = styled.section`
  position: absolute;
  top: 15px;
  right: 19px;
  bottom: 65px;
  left: 55px;
  display: flex;
  flex-direction: column;
  border: 1px solid #aaa;
  background-color: #f0f0f0;
  box-shadow: 0 0 6px rgba(0, 0, 0, 0.4);
`;

const TitleBar = styled.div`
  display: flex;
  justify-content: space-between;
  align-items: center;
  height: 15px;
  padding: 0 6px 0 1px;
  background-color: #fff;
  color: #999;
  font-family: "Noto Sans", sans-serif;
`;

const MenuBar = styled.div`
  display: flex;
  gap: 10px;
  height: 13px;
  padding-left: 3px;
  background-color: #fff;
  color: #666;
  font-family: "Noto Sans", sans-serif;
`;

const WindowBody = styled.div`
  flex: 1;
  min-height: 0;
  display: flex;
  gap: 2px;
  margin-top: 2px;
  padding-right: 3px;
`;

const Sidebar = styled.div`
  display: flex;
  flex-direction: column;
  width: 111px;
  border: 1px solid #aaa;
  border-left: 0;
`;

const CasePicker = styled.div`
  height: 17px;
  ${SelectWrap} {
    height: 15px;
    background-color: #e8e8e8;
  }
`;

const SideTree = styled.div`
  flex: 1;
  display: flex;
  flex-direction: column;
  overflow: hidden;
  border-top: 1px solid #999;
  background-color: #fbfbf3;
  ${ScrollThumb} {
    width: 67px;
  }
`;

const Content = styled.div`
  flex: 1;
  min-width: 0;
  display: flex;
  flex-direction: column;
  padding: 1px 1px 5px 1px;
  border: 1px solid #999;
  border-left: 0;
`;

const Heading = styled.h1`
  height: 13px;
  margin: 0;
  padding-left: 1px;
  background-color: #bfccda;
  font: inherit;
  font-family: "Noto Sans", sans-serif;
  line-height: 12px;
`;

const TablePanel = styled.div`
  margin: 5px 3px 0 4px;
  border-right: 1px solid #ccccf5;
  border-bottom: 1px solid #ccccf5;
  background-color: #eff3fa;
`;

const TableFrame = styled.div`
  display: flex;
`;

const Grid = styled.table`
  flex: 1;
  min-width: 0;
  height: 132px;
  table-layout: fixed;
  border-collapse: collapse;
  background-color: #fff;
  font-family: "Liberation Sans", Arial, sans-serif;
  line-height: 8px;
  text-align: center;
`;

const HeadCell = styled.th`
  height: 10px;
  padding: 0;
  border: 1px solid #a8a8a8;
  border-top-color: ${(p) => (p.$low ? "#f0f0f0" : "#a8a8a8")};
  border-bottom-color: ${(p) => (p.$top ? "#f0f0f0" : "#a8a8a8")};
  background-color: #f0f0f0;
  font-weight: normal;
  white-space: nowrap;
`;

const LetterCell = styled.th`
  height: 9px;
  padding: 0;
  border: 1px solid #888;
  background-color: ${(p) => (p.$on ? "#0078d7" : "#e0e0e0")};
  color: ${(p) => (p.$on ? "#fff" : "#222")};
  font-weight: normal;
`;

const RowHead = styled.th`
  height: 10px;
  padding: 0;
  border: 1px solid #888;
  background-color: ${(p) => (p.$on ? "#0078d7" : "#e0e0e0")};
  color: ${(p) => (p.$on ? "#fff" : "#222")};
  font-weight: normal;
`;

const Cell = styled.td`
  height: 10px;
  padding: 0 ${(p) => (p.$num ? 2 : 0)}px;
  border: 1px solid #a8a8a8;
  outline: ${(p) => (p.$cursor ? "1px dashed #333" : "none")};
  outline-offset: -1px;
  text-align: ${(p) => (p.$num ? "right" : "center")};
`;

const Check = styled.input`
  appearance: none;
  display: block;
  width: 7px;
  height: 7px;
  margin: 0 auto;
  border: 1px solid #333;
  background-color: #fff;
  box-shadow: 1px 1px 0 #555;
  &:checked::after {
    content: "";
    display: block;
    width: 2px;
    height: 4px;
    margin: 0 auto;
    border: solid #111;
    border-width: 0 1px 1px 0;
    transform: rotate(40deg);
  }
`;

const VScroll = styled.div`
  display: flex;
  flex-direction: column;
  align-items: center;
  width: 11px;
  padding: 2px 0;
  background-color: #f0f0f0;
`;

const VThumb = styled.div`
  width: 10px;
  height: 73px;
  margin: 2px 0 auto;
  background-color: #cdcdcd;
`;

const TableTools = styled.div`
  display: flex;
  justify-content: space-between;
  padding: 3px 2px 2px 0;
`;

const LowerArea = styled.div`
  flex: 1;
  min-height: 0;
  display: flex;
  gap: 5px;
  margin: 6px 3px 0 4px;
`;

const SettingsPanel = styled.div`
  width: 289px;
  border-right: 1px solid #ccccf5;
  background-color: #fff;
`;

const GroupTitle = styled.h2`
  height: 11px;
  margin: 0;
  padding-left: 1px;
  background-color: #dce6f4;
  clip-path: polygon(0 0, calc(100% - 7px) 0, 100% 7px, 100% 100%, 0 100%);
  color: #1f4a80;
  font: inherit;
  line-height: 11px;
`;

const SettingRow = styled.div`
  display: flex;
  align-items: center;
  gap: ${(p) => (p.$sub ? 2 : 0)}px;
  height: 10px;
  padding-left: ${(p) => (p.$sub ? 9 : 0)}px;
  border-bottom: 1px solid #c8c8c8;
  background-color: ${(p) => (p.$sub ? "#f0f0f0" : "#fff")};
`;

const SettingName = styled.span`
  display: flex;
  align-items: center;
  gap: 2px;
  width: 111px;
  padding-left: 2px;
  background-color: #f0f0f0;
`;

const SettingSymbol = styled.span`
  width: 38px;
  height: 10px;
  border: solid #c8c8c8;
  border-width: 0 1px;
  background-color: #f0f0f0;
`;

const SettingValue = styled.span`
  padding-left: 2px;
  color: #999;
`;

const ViewPanel = styled.div`
  flex: 1;
  display: flex;
  flex-direction: column;
  border: 1px solid #ccccf5;
  border-top-color: #aaa;
  background-color: #eff3fa;
`;

const Scene = styled.svg`
  flex: 1;
  width: 100%;
  min-height: 0;
  background-color: #fff;
`;

const ViewTools = styled.div`
  display: flex;
  justify-content: space-between;
  padding: 2px 1px 1px;
`;

const WindowFooter = styled.div`
  display: flex;
  justify-content: space-between;
  align-items: center;
  height: 26px;
  padding: 2px 6px 0 4px;
`;

const StatusBar = styled.div`
  height: 13px;
  border-top: 1px solid #bbb;
`;

/* warp spring dialog */

const Dialog = styled.section`
  position: absolute;
  top: 254px;
  left: 173px;
  display: flex;
  flex-direction: column;
  width: 339px;
  border: 2px solid #66a52e;
  background-color: #f0f0f0;
  box-shadow: 0 0 9px rgba(0, 0, 0, 0.45);
`;

const DialogTitle = styled.div`
  display: flex;
  justify-content: space-between;
  align-items: center;
  height: 16px;
  padding: 0 5px 0 1px;
  background-color: #fff;
  font-family: "Noto Sans", sans-serif;
`;

const DialogBody = styled.div`
  display: flex;
  gap: 5px;
  height: 245px;
  padding: 5px 6px 4px 5px;
  border-bottom: 1px solid #bbb;
`;

const FormColumn = styled.div`
  display: flex;
  flex-direction: column;
  gap: 6px;
  width: 170px;
`;

const Group = styled.div`
  flex: ${(p) => (p.$grow ? 1 : "none")};
  border: solid #ccccf5;
  border-width: 0 1px 1px 0;
  background-color: #eff3fa;
`;

const RadioList = styled.div`
  display: grid;
  grid-auto-rows: 1fr;
  height: 61px;
  padding: 3px 1px 1px;
`;

const RadioLabel = styled.label`
  display: flex;
  align-items: center;
  gap: 2px;
`;

const Radio = styled.input`
  appearance: none;
  width: 8px;
  height: 8px;
  margin: 0;
  border: 1px solid #444;
  border-radius: 50%;
  background-color: #fff;
  &:checked {
    background: radial-gradient(#222 0 2px, #fff 3px);
  }
`;

const FieldRow = styled.div`
  display: flex;
  align-items: center;
  gap: 3px;
  padding: 1px;
`;

const TextField = styled.input`
  width: 109px;
  height: 14px;
  padding: 0 2px;
  border: 1px solid #888;
  background-color: #fff;
`;

const SectionFields = styled.div`
  display: flex;
  flex-direction: column;
  gap: 1px;
  padding-top: 2px;
  > label {
    padding-left: 1px;
    margin-top: 2px;
    height: 11px;
  }
`;

const HeightRow = styled.div`
  display: flex;
  align-items: center;
  gap: 3px;
  margin-top: 6px;
  padding-left: 1px;
  label {
    width: 52px;
    white-space: nowrap;
  }
`;

const Spin = styled.span`
  display: flex;
  width: 53px;
  height: 13px;
  border: 1px solid #888;
  background-color: #fff;
`;

const SpinInput = styled.input`
  flex: 1;
  min-width: 0;
  padding: 0 4px 0 0;
  border: 0;
  background: none;
  text-align: right;
`;

const Unit = styled.span`
  width: 16px;
`;

const PreviewColumn = styled.div`
  flex: 1;
  min-width: 0;
  display: flex;
  flex-direction: column;
  gap: 7px;
`;

const Preview = styled.div`
  flex: 1;
  min-height: 0;
  border: 1px solid #d0d0d8;
  background: linear-gradient(to top right, #fff 10%, #fef9ea 55%, #fdf3da);
`;

const JointSvg = styled.svg`
  width: 100%;
  height: 100%;
`;

const Result = styled.div`
  display: flex;
  align-items: center;
  justify-content: space-between;
  height: 24px;
  padding: 0 6px 0 1px;
  border: solid #ccccf5;
  border-width: 0 1px 1px 0;
  background-color: #eff3fa;
`;

const ResultName = styled.label`
  width: 46px;
  line-height: 8px;
`;

const ResultField = styled.input`
  width: 53px;
  height: 13px;
  padding: 0 4px;
  border: 1px solid #888;
  background-color: #f0f0f0;
  text-align: right;
`;

const DialogFooter = styled.div`
  display: flex;
  justify-content: space-between;
  align-items: center;
  height: 27px;
  padding: 3px 7px 0 5px;
`;

/* green ring and arrow that point from the table button to the dialog */
const Callout = styled.svg`
  position: absolute;
  top: 186px;
  left: 395px;
`;

export default App;
